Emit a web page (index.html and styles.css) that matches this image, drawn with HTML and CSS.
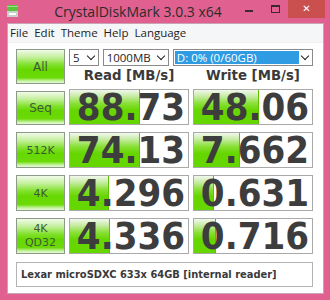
FILE: index.html
```html
<!DOCTYPE html>
<html>
<head>
<meta charset="utf-8">
<link rel="stylesheet" href="styles.css">
</head>
<body>
<div class="frame">
  <div class="titlebar">
    <svg class="appicon" width="11" height="12" viewBox="0 0 11 12">
      <rect x="0" y="0" width="11" height="6" fill="#5cc43c"/>
      <rect x="0" y="1" width="11" height="1" fill="#9be07e"/>
      <rect x="0" y="6" width="11" height="6" fill="#c8d0c8"/>
      <rect x="2" y="8" width="7" height="2" fill="#ffffff"/>
    </svg>
    <div class="title">CrystalDiskMark 3.0.3 x64</div>
    <div class="winbtns">
      <div class="minbtn"><span></span></div>
      <div class="maxbtn"><span></span></div>
      <div class="closebtn">✕</div>
    </div>
  </div>
  <div class="client">
    <div class="menubar">
      <span>File</span><span>Edit</span><span>Theme</span><span>Help</span><span>Language</span>
    </div>
    <div class="content">
      <div class="grid">
        <div class="btn btn-all">All</div>
        <div class="combos">
          <div class="combo c-count"><span class="cval">5</span><span class="arrow"></span></div>
          <div class="combo c-size"><span class="cval">1000MB</span><span class="arrow"></span></div>
          <div class="combo c-drive"><span class="cval sel">D: 0% (0/60GB)</span><span class="arrow"></span></div>
        </div>
        <div class="head">Read [MB/s]</div>
        <div class="head">Write [MB/s]</div>

        <div class="btn first">Seq</div>
        <div class="res first"><div class="bar" style="width:69px"></div><span class="num">88.73</span></div>
        <div class="res first"><div class="bar" style="width:64px"></div><span class="num">48.06</span></div>

        <div class="btn">512K</div>
        <div class="res"><div class="bar" style="width:69px"></div><span class="num">74.13</span></div>
        <div class="res"><div class="bar" style="width:45px"></div><span class="num">7.662</span></div>

        <div class="btn">4K</div>
        <div class="res"><div class="bar" style="width:38px"></div><span class="num">4.296</span></div>
        <div class="res"><div class="bar" style="width:19px"></div><span class="num">0.631</span></div>

        <div class="btn two">4K<br>QD32</div>
        <div class="res"><div class="bar" style="width:39px"></div><span class="num">4.336</span></div>
        <div class="res"><div class="bar" style="width:21px"></div><span class="num">0.716</span></div>
      </div>
      <div class="comment">Lexar microSDXC 633x 64GB [internal reader]</div>
    </div>
  </div>
</div>
</body>
</html>
```
FILE: styles.css
```css
html, body {
  margin: 0;
  padding: 0;
}
body {
  width: 330px;
  height: 300px;
  overflow: hidden;
  background: #e0618f;
}
.frame {
  width: 330px;
  height: 300px;
  display: flex;
  flex-direction: column;
  background: #e0618f;
}
.titlebar {
  height: 23px;
  display: flex;
  align-items: flex-start;
}
.appicon {
  margin: 5px 0 0 7px;
}
.title {
  flex: 1;
  text-align: center;
  font-family: "Open Sans", "Noto Sans", sans-serif;
  font-size: 14px;
  color: #2b2b2b;
  line-height: 23px;
  padding-left: 22px;
}
.winbtns {
  display: flex;
  align-items: flex-start;
  margin-right: 5px;
}
.minbtn,
.maxbtn {
  width: 26px;
  height: 18px;
  position: relative;
}
.minbtn span {
  position: absolute;
  left: 9px;
  top: 10px;
  width: 8px;
  height: 2px;
  background: #3a2a30;
}
.maxbtn span {
  position: absolute;
  left: 9px;
  top: 5px;
  width: 7px;
  height: 5px;
  border: 1px solid #3a2a30;
  border-top-width: 2px;
}
.closebtn {
  width: 37px;
  height: 18px;
  background: #c9504f;
  color: #ffffff;
  font-family: "DejaVu Sans", sans-serif;
  font-size: 10px;
  font-weight: bold;
  text-align: center;
  line-height: 17px;
}
.client {
  flex: 1;
  margin: 0 6px 6px 7px;
  background: #ffffff;
  border: 1px solid #c9a4b4;
  display: flex;
  flex-direction: column;
}
.menubar {
  height: 18px;
  background: #f5f6f7;
  display: flex;
  gap: 6px;
  padding-left: 2px;
  font-family: "Open Sans", "Noto Sans", sans-serif;
  font-size: 11.5px;
  line-height: 17px;
  color: #1e1e1e;
  border-bottom: 1px solid #f0f0f0;
}
.content {
  padding: 5px 0 0 8px;
}
.grid {
  display: grid;
  grid-template-columns: 49px 120px 120px;
  grid-template-rows: 17px 19px 41px 43px 43px 43px;
  column-gap: 4px;
}
.grid > .btn:not(.btn-all),
.grid > .res {
  margin-top: 7px;
}
.grid > .first {
  margin-top: 5px;
}
.btn {
  border: 1px solid #8d9a88;
  background: linear-gradient(to bottom, #f1faea 0%, #c4f09c 22%, #7fe12a 45%, #66d800 60%, #6cda08 84%, #c6f3a2 94%, #e6f9d8 100%);
  display: flex;
  align-items: center;
  justify-content: center;
  font-family: "DejaVu Sans", sans-serif;
  font-size: 11px;
  color: #3e5a34;
  box-sizing: border-box;
}
.btn-all {
  grid-row: 1 / 3;
  font-size: 12px;
  margin-top: 1px;
}
.btn.first {
  font-size: 12px;
}
.btn.two {
  line-height: 14px;
  text-align: center;
}
.combos {
  grid-column: 2 / 4;
  display: flex;
  gap: 4px;
  height: 16px;
  margin-top: 1px;
}
.combo {
  border: 1px solid #8a8a8a;
  background: #ffffff;
  display: flex;
  align-items: stretch;
  font-family: "Open Sans", "Noto Sans", sans-serif;
  font-size: 11.5px;
  color: #1e1e1e;
  box-sizing: border-box;
  height: 17px;
}
.c-count { width: 30px; }
.c-size { width: 67px; }
.c-drive { width: 142px; }
.cval {
  flex: 1;
  padding-left: 3px;
  line-height: 15px;
  white-space: nowrap;
  overflow: hidden;
}
.cval.sel {
  background: #2f9be2;
  color: #ffffff;
  margin: 1px;
  line-height: 13px;
  padding-left: 2px;
}
.arrow {
  width: 12px;
  position: relative;
}
.arrow::after {
  content: "";
  position: absolute;
  left: 2px;
  top: 3px;
  width: 5px;
  height: 5px;
  border-right: 1.5px solid #222;
  border-bottom: 1.5px solid #222;
  transform: rotate(45deg);
}
.head {
  font-family: "DejaVu Sans", sans-serif;
  font-weight: bold;
  font-size: 13.3px;
  color: #3a3a3a;
  text-align: center;
  line-height: 19px;
  padding-top: 1px;
}
.res {
  position: relative;
  border: 1px solid #a9a9a9;
  background: #ffffff;
  box-sizing: border-box;
  display: flex;
  align-items: center;
  justify-content: flex-end;
  padding-right: 3px;
}
.bar {
  position: absolute;
  left: 0;
  top: 0;
  bottom: 0;
  background: linear-gradient(to bottom, #f2f8ee 0%, #c8eca6 18%, #88e036 40%, #66d600 60%, #66d600 100%);
  border-right: 1px solid #5cc000;
}
.num {
  position: relative;
  font-family: "DejaVu Sans Condensed", "DejaVu Sans", sans-serif;
  font-stretch: condensed;
  font-weight: bold;
  font-size: 38px;
  color: #3d3d3d;
  line-height: 34px;
}
.comment {
  margin-top: 8px;
  width: 297px;
  height: 25px;
  box-sizing: border-box;
  border: 1px solid #b4b4b4;
  font-family: "DejaVu Sans Condensed", "DejaVu Sans", sans-serif;
  font-stretch: condensed;
  font-weight: bold;
  font-size: 11px;
  color: #3a3a3a;
  line-height: 23px;
  padding-left: 4px;
  white-space: nowrap;
}
```
